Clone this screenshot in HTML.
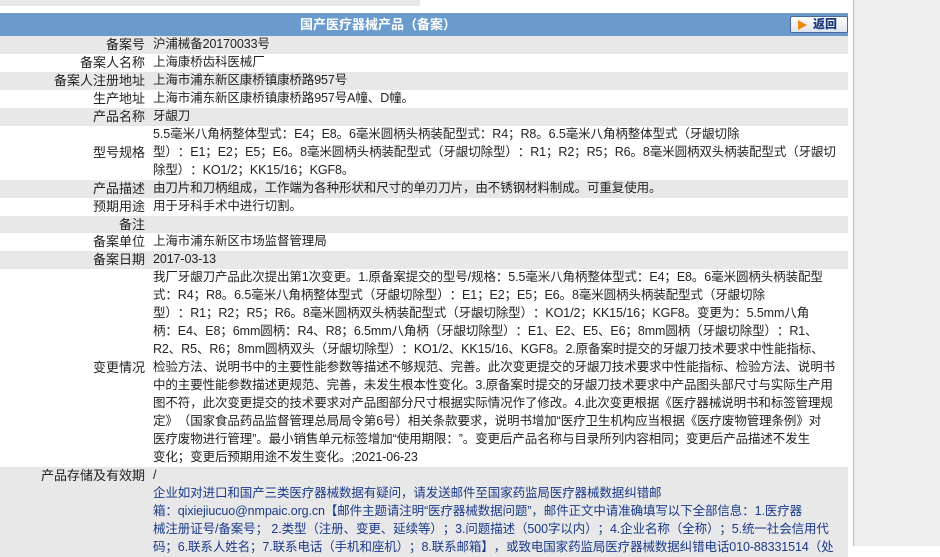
<!DOCTYPE html>
<html><head><meta charset="utf-8"><style>
body{margin:0;width:940px;height:546px;overflow:hidden;background:#fff;font-family:"Liberation Sans","Noto Sans CJK SC",sans-serif;font-size:13px;color:#222;position:relative;text-spacing-trim:space-all}
.topbar{position:absolute;left:0;top:0;width:420px;height:6px;background:#e8e8e8}
.side{position:absolute;left:853px;top:0;width:87px;height:546px;background:#eee;border-left:1px solid #bbb}
.hdr{position:absolute;left:0;top:13px;width:848px;height:23px;background:#6a9bcc;color:#fff;font-weight:bold;font-size:13px;line-height:23px}
.hdr span{position:absolute;left:300px}
.btn{position:absolute;left:790px;top:3px;width:56px;height:15px;background:linear-gradient(#fff,#dde4ee);border:1px solid #4a6a9a;border-radius:2px;color:#1a3a7a;font-size:12px;line-height:15px}
.btn i{position:absolute;left:7px;top:3px;width:0;height:0;border-left:9px solid #e88a10;border-top:5px solid transparent;border-bottom:5px solid transparent}
.btn b{position:absolute;left:22px}
table{position:absolute;left:0;top:36px;width:848px;border-collapse:collapse;table-layout:fixed}
td{padding:0;line-height:17.96px;vertical-align:middle;white-space:nowrap;overflow:hidden}
td.l{text-align:right;padding-right:8px}
td:nth-child(2){font-size:12.5px;letter-spacing:-0.1px}
tr.g{background:#e8e8e8}
.blue{color:#1a3a8a}
</style></head><body>
<div class="topbar"></div>
<div class="side"></div>
<div class="hdr"><span>国产医疗器械产品（备案）</span><div class="btn"><i></i><b>返回</b></div></div>
<table>
<colgroup><col style="width:153px"><col style="width:695px"></colgroup>
<tr class="g"><td class="l">备案号</td><td>沪浦械备20170033号</td></tr>
<tr><td class="l">备案人名称</td><td>上海康桥齿科医械厂</td></tr>
<tr class="g"><td class="l">备案人注册地址</td><td>上海市浦东新区康桥镇康桥路957号</td></tr>
<tr><td class="l">生产地址</td><td>上海市浦东新区康桥镇康桥路957号A幢、D幢。</td></tr>
<tr class="g"><td class="l">产品名称</td><td>牙龈刀</td></tr>
<tr><td class="l">型号规格</td><td>5.5毫米八角柄整体型式：E4；E8。6毫米圆柄头柄装配型式：R4；R8。6.5毫米八角柄整体型式（牙龈切除<br>型）：E1；E2；E5；E6。8毫米圆柄头柄装配型式（牙龈切除型）：R1；R2；R5；R6。8毫米圆柄双头柄装配型式（牙龈切<br>除型）：KO1/2；KK15/16；KGF8。</td></tr>
<tr class="g"><td class="l">产品描述</td><td>由刀片和刀柄组成，工作端为各种形状和尺寸的单刃刀片，由不锈钢材料制成。可重复使用。</td></tr>
<tr><td class="l">预期用途</td><td>用于牙科手术中进行切割。</td></tr>
<tr class="g"><td class="l">备注</td><td>&nbsp;</td></tr>
<tr><td class="l">备案单位</td><td>上海市浦东新区市场监督管理局</td></tr>
<tr class="g"><td class="l">备案日期</td><td>2017-03-13</td></tr>
<tr><td class="l">变更情况</td><td>我厂牙龈刀产品此次提出第1次变更。1.原备案提交的型号/规格：5.5毫米八角柄整体型式：E4；E8。6毫米圆柄头柄装配型<br>式：R4；R8。6.5毫米八角柄整体型式（牙龈切除型）：E1；E2；E5；E6。8毫米圆柄头柄装配型式（牙龈切除<br>型）：R1；R2；R5；R6。8毫米圆柄双头柄装配型式（牙龈切除型）：KO1/2；KK15/16；KGF8。变更为：5.5mm八角<br>柄：E4、E8；6mm圆柄：R4、R8；6.5mm八角柄（牙龈切除型）：E1、E2、E5、E6；8mm圆柄（牙龈切除型）：R1、<br>R2、R5、R6；8mm圆柄双头（牙龈切除型）：KO1/2、KK15/16、KGF8。2.原备案时提交的牙龈刀技术要求中性能指标、<br>检验方法、说明书中的主要性能参数等描述不够规范、完善。此次变更提交的牙龈刀技术要求中性能指标、检验方法、说明书<br>中的主要性能参数描述更规范、完善，未发生根本性变化。3.原备案时提交的牙龈刀技术要求中产品图头部尺寸与实际生产用<br>图不符，此次变更提交的技术要求对产品图部分尺寸根据实际情况作了修改。4.此次变更根据《医疗器械说明书和标签管理规<br>定》（国家食品药品监督管理总局局令第6号）相关条款要求，说明书增加“医疗卫生机构应当根据《医疗废物管理条例》对<br>医疗废物进行管理”。最小销售单元标签增加“使用期限：”。变更后产品名称与目录所列内容相同；变更后产品描述不发生<br>变化；变更后预期用途不发生变化。;2021-06-23</td></tr>
<tr class="g"><td class="l" style="vertical-align:top">产品存储及有效期</td><td>/<br><span class="blue">企业如对进口和国产三类医疗器械数据有疑问，请发送邮件至国家药监局医疗器械数据纠错邮<br>箱：qixiejiucuo@nmpaic.org.cn【邮件主题请注明“医疗器械数据问题”，邮件正文中请准确填写以下全部信息：1.医疗器<br>械注册证号/备案号； 2.类型（注册、变更、延续等）；3.问题描述（500字以内）；4.企业名称（全称）；5.统一社会信用代<br>码；6.联系人姓名；7.联系电话（手机和座机）；8.联系邮箱】，或致电国家药监局医疗器械数据纠错电话010-88331514（处</span></td></tr>
</table>
</body></html>
